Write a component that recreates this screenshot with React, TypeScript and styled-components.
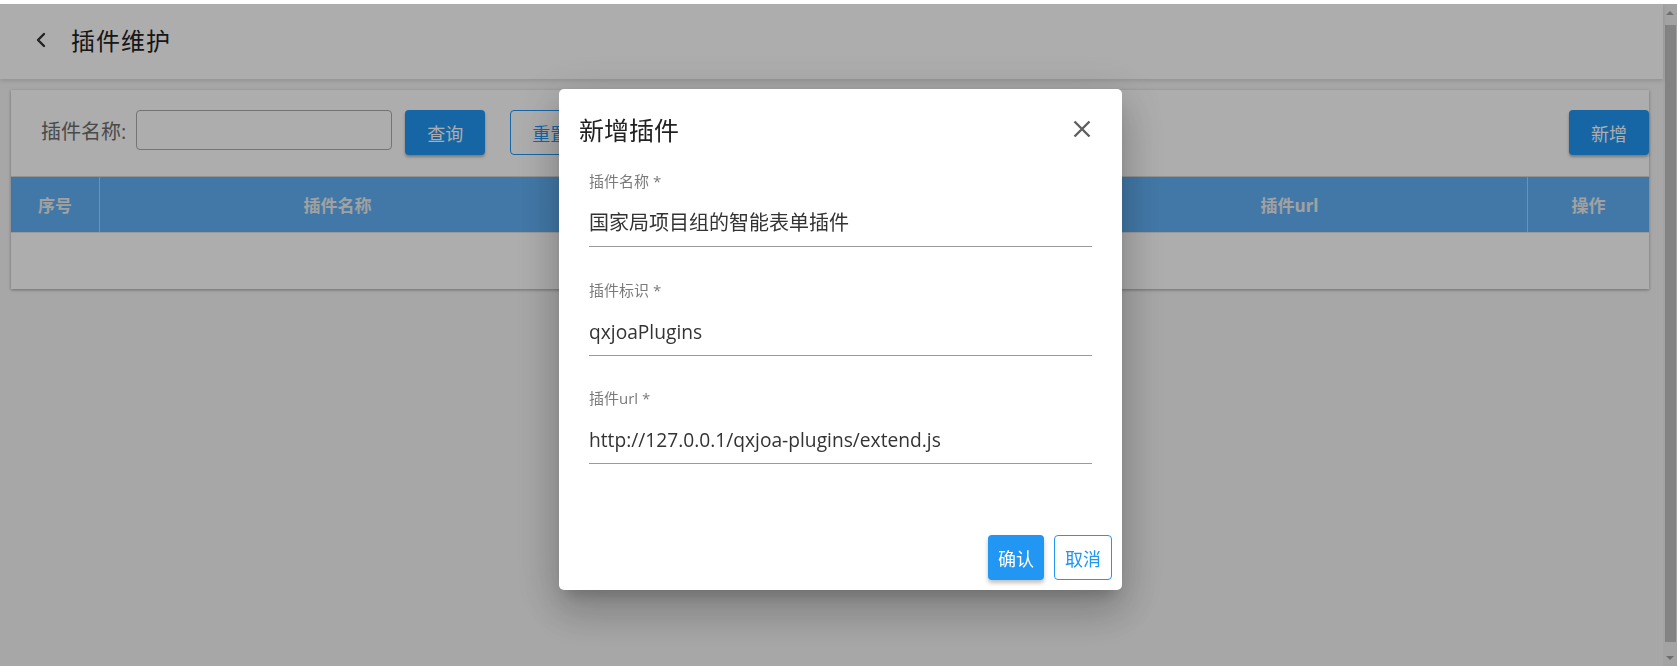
import React from "react";
import styled, { createGlobalStyle } from "styled-components";
import { ChevronLeft } from "lucide-react";

const GlobalStyle = createGlobalStyle`
  html, body {
    margin: 0;
    padding: 0;
    height: 100%;
    overflow: hidden;
  }
  body {
    font-family: "Open Sans", "Noto Sans CJK SC", sans-serif;
    background: #ffffff;
  }
  * { box-sizing: border-box; }
`;

const Shell = styled.div`
  display: flex;
  flex-direction: column;
  width: 1677px;
  height: 666px;
`;

const TopStrip = styled.div`
  height: 4px;
  background: #ffffff;
`;

const Frame = styled.div`
  flex: 1;
  display: flex;
  min-height: 0;
`;

const Page = styled.div`
  flex: 1;
  background: #f6f6f6;
  display: flex;
  flex-direction: column;
`;

const Header = styled.header`
  height: 75px;
  background: #ffffff;
  display: flex;
  align-items: center;
  padding-left: 29px;
  box-shadow: 0 2px 4px rgba(0, 0, 0, 0.12);
  position: relative;
  z-index: 1;
`;

const BackButton = styled.span`
  display: flex;
  color: #333;
  margin-right: 18px;
  margin-top: -4px;
`;

const HeaderTitle = styled.h1`
  margin: 0;
  font-size: 24px;
  font-weight: 400;
  color: #222;
  letter-spacing: 1px;
  margin-top: -4px;
`;

const Content = styled.main`
  padding: 11px 14px 0 11px;
`;

const Card = styled.section`
  background: #ffffff;
  box-shadow: 0 1px 3px rgba(0, 0, 0, 0.35);
`;

const Toolbar = styled.div`
  display: flex;
  align-items: center;
  padding: 20px 0 21px 30px;
`;

const FilterLabel = styled.label`
  font-size: 20px;
  color: #6e6e6e;
  margin-right: 10px;
  margin-top: -4px;
`;

const FilterInput = styled.div`
  width: 256px;
  height: 40px;
  border: 1px solid #acacac;
  border-radius: 4px;
  margin-right: 13px;
  margin-top: -5px;
`;

const ToolButton = styled.button<{ $variant: "solid" | "outline" }>`
  width: 80px;
  height: 45px;
  border-radius: 4px;
  font-family: inherit;
  font-size: 18px;
  cursor: pointer;
  padding: 0;
  ${(p) =>
    p.$variant === "solid"
      ? `background:#2196f3;color:#ffffff;border:none;box-shadow:0 2px 3px rgba(0,0,0,0.3);`
      : `background:#ffffff;color:#2196f3;border:1px solid #2196f3;`}
`;

const Spacer = styled.div`
  flex: 1;
`;

const Gap = styled.div<{ $w: number }>`
  width: ${(p) => p.$w}px;
`;

const TableHead = styled.div`
  display: grid;
  grid-template-columns: 89px 1fr 1fr 1fr 121px;
  height: 56px;
  background: #62b2f7;
  border-top: 1px solid #d8d8d8;
`;

const HeadCell = styled.div<{ $last?: boolean }>`
  display: flex;
  align-items: center;
  justify-content: center;
  font-size: 17px;
  font-weight: 700;
  color: #ededed;
  border-right: ${(p) => (p.$last ? "none" : "1px solid rgba(255,255,255,0.45)")};
`;

const EmptyRow = styled.div`
  height: 57px;
  border-top: 1px solid #e4e4e4;
`;

const ScrollTrack = styled.div`
  width: 14px;
  background: #f1f1f1;
  display: flex;
  flex-direction: column;
  align-items: center;
  padding: 0 1px;
`;

const ScrollArrow = styled.div<{ $down?: boolean }>`
  height: 17px;
  width: 100%;
  display: flex;
  align-items: center;
  justify-content: center;
  &::after {
    content: "";
    border-left: 4px solid transparent;
    border-right: 4px solid transparent;
    ${(p) => (p.$down ? "border-top: 4px solid #a3a3a3;" : "border-bottom: 4px solid #a3a3a3;")}
  }
`;

const ScrollThumb = styled.div`
  flex: 1;
  width: 11px;
  background: #c1c1c1;
  margin: 4px 0 7px;
`;

const Overlay = styled.div`
  position: fixed;
  top: 4px;
  left: 0;
  width: 1677px;
  height: 662px;
  background: rgba(0, 0, 0, 0.32);
  display: flex;
  align-items: center;
  justify-content: center;
  padding: 9px 0 0 4px;
  z-index: 10;
`;

const Dialog = styled.div`
  width: 563px;
  height: 501px;
  background: #ffffff;
  border-radius: 5px;
  box-shadow: 0 11px 15px -7px rgba(0, 0, 0, 0.2), 0 24px 38px 3px rgba(0, 0, 0, 0.14),
    0 9px 46px 8px rgba(0, 0, 0, 0.12);
  display: flex;
  flex-direction: column;
  padding: 25px 10px 10px 0;
`;

const DialogHeader = styled.div`
  display: flex;
  align-items: center;
  justify-content: space-between;
  height: 32px;
  padding-left: 20px;
  padding-right: 21px;
`;

const DialogTitle = styled.h2`
  margin: 0;
  font-size: 25px;
  line-height: 32px;
  font-weight: 400;
  color: #222;
`;

const CloseButton = styled.button`
  border: none;
  background: none;
  padding: 0;
  display: flex;
  cursor: pointer;
  margin-top: -2px;
`;

const Fields = styled.div`
  display: flex;
  flex-direction: column;
  gap: 32.5px;
  padding: 0 20px 0 30px;
  margin-top: 25px;
`;

const Field = styled.div`
  display: flex;
  flex-direction: column;
  border-bottom: 1px solid #9a9a9a;
  padding-bottom: 9px;
`;

const FieldLabel = styled.label`
  font-size: 15px;
  line-height: 20px;
  height: 20px;
  color: #7a7a7a;
`;

const FieldValue = styled.div<{ $latin?: boolean }>`
  margin-top: 18px;
  font-size: ${(p) => (p.$latin ? "19.2px" : "20px")};
  line-height: 28px;
  height: 28px;
  color: #333;
  white-space: nowrap;
`;

const Actions = styled.div`
  margin-top: auto;
  display: flex;
  justify-content: flex-end;
  gap: 10px;
`;

const DialogButton = styled.button<{ $primary?: boolean }>`
  height: 45px;
  padding: 0 10px;
  border-radius: 4px;
  font-family: inherit;
  font-size: 18px;
  cursor: pointer;
  ${(p) =>
    p.$primary
      ? `background:#2196f3;color:#ffffff;border:none;box-shadow:0 3px 4px rgba(0,0,0,0.25);`
      : `background:#ffffff;color:#2196f3;border:1px solid #2196f3;`}
`;

const fields = [
  { label: "插件名称 *", value: "国家局项目组的智能表单插件", latin: false },
  { label: "插件标识 *", value: "qxjoaPlugins", latin: true },
  { label: "插件url *", value: "http://127.0.0.1/qxjoa-plugins/extend.js", latin: true },
];

const columns = ["序号", "插件名称", "插件标识", "插件url", "操作"];

export default function App() {
  return (
    <>
      <GlobalStyle />
      <Shell>
        <TopStrip />
        <Frame>
          <Page>
            <Header>
              <BackButton>
                <ChevronLeft size={24} strokeWidth={2.4} />
              </BackButton>
              <HeaderTitle>插件维护</HeaderTitle>
            </Header>
            <Content>
              <Card>
                <Toolbar>
                  <FilterLabel>插件名称:</FilterLabel>
                  <FilterInput />
                  <ToolButton $variant="solid">查询</ToolButton>
                  <Gap $w={25} />
                  <ToolButton $variant="outline">重置</ToolButton>
                  <Spacer />
                  <ToolButton $variant="solid">新增</ToolButton>
                </Toolbar>
                <TableHead>
                  {columns.map((c, i) => (
                    <HeadCell key={c} $last={i === columns.length - 1}>
                      {c}
                    </HeadCell>
                  ))}
                </TableHead>
                <EmptyRow />
              </Card>
            </Content>
          </Page>
          <ScrollTrack>
            <ScrollArrow />
            <ScrollThumb />
            <ScrollArrow $down />
          </ScrollTrack>
        </Frame>
      </Shell>
      <Overlay>
        <Dialog>
          <DialogHeader>
            <DialogTitle>新增插件</DialogTitle>
            <CloseButton aria-label="关闭">
              <svg width="18" height="18" viewBox="0 0 18 18">
                <path d="M1.5 1.5 L16.5 16.5 M16.5 1.5 L1.5 16.5" stroke="#5f5f5f" strokeWidth="2.4" />
              </svg>
            </CloseButton>
          </DialogHeader>
          <Fields>
            {fields.map((f) => (
              <Field key={f.label}>
                <FieldLabel>{f.label}</FieldLabel>
                <FieldValue $latin={f.latin}>{f.value}</FieldValue>
              </Field>
            ))}
          </Fields>
          <Actions>
            <DialogButton $primary>确认</DialogButton>
            <DialogButton>取消</DialogButton>
          </Actions>
        </Dialog>
      </Overlay>
    </>
  );
}
